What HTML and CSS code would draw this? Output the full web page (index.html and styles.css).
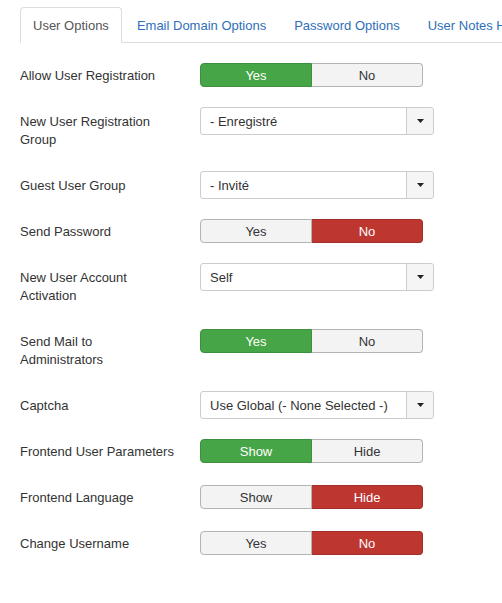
FILE: index.html
```html
<!DOCTYPE html>
<html>
<head>
<meta charset="utf-8">
<link rel="stylesheet" href="styles.css">
</head>
<body>
<div class="page">
  <ul class="nav-tabs">
    <li class="tab active"><a>User Options</a></li>
    <li class="tab"><a>Email Domain Options</a></li>
    <li class="tab"><a>Password Options</a></li>
    <li class="tab"><a>User Notes History</a></li>
  </ul>
  <div class="form">
    <div class="row">
      <label class="label">Allow User Registration</label>
      <div class="btn-group"><span class="btn on-green">Yes</span><span class="btn">No</span></div>
    </div>
    <div class="row">
      <label class="label">New User Registration Group</label>
      <div class="select"><span class="select-text">- Enregistré</span><span class="select-arrow"><svg width="7" height="4" viewBox="0 0 7 4"><path d="M0 0h7L3.5 4z" fill="#222"/></svg></span></div>
    </div>
    <div class="row">
      <label class="label">Guest User Group</label>
      <div class="select"><span class="select-text">- Invité</span><span class="select-arrow"><svg width="7" height="4" viewBox="0 0 7 4"><path d="M0 0h7L3.5 4z" fill="#222"/></svg></span></div>
    </div>
    <div class="row">
      <label class="label">Send Password</label>
      <div class="btn-group"><span class="btn">Yes</span><span class="btn on-red">No</span></div>
    </div>
    <div class="row">
      <label class="label">New User Account Activation</label>
      <div class="select"><span class="select-text">Self</span><span class="select-arrow"><svg width="7" height="4" viewBox="0 0 7 4"><path d="M0 0h7L3.5 4z" fill="#222"/></svg></span></div>
    </div>
    <div class="row">
      <label class="label">Send Mail to Administrators</label>
      <div class="btn-group"><span class="btn on-green">Yes</span><span class="btn">No</span></div>
    </div>
    <div class="row">
      <label class="label">Captcha</label>
      <div class="select"><span class="select-text">Use Global (- None Selected -)</span><span class="select-arrow"><svg width="7" height="4" viewBox="0 0 7 4"><path d="M0 0h7L3.5 4z" fill="#222"/></svg></span></div>
    </div>
    <div class="row">
      <label class="label">Frontend User Parameters</label>
      <div class="btn-group"><span class="btn on-green">Show</span><span class="btn">Hide</span></div>
    </div>
    <div class="row">
      <label class="label">Frontend Language</label>
      <div class="btn-group"><span class="btn">Show</span><span class="btn on-red">Hide</span></div>
    </div>
    <div class="row">
      <label class="label">Change Username</label>
      <div class="btn-group"><span class="btn">Yes</span><span class="btn on-red">No</span></div>
    </div>
  </div>
</div>
</body>
</html>
```
FILE: styles.css
```css
html, body {
  margin: 0;
  padding: 0;
  background: #fff;
  overflow: hidden;
}
body {
  font-family: "Liberation Sans", Arial, sans-serif;
  font-size: 13px;
  line-height: 18px;
  color: #333;
}
.page {
  padding: 7px 0 0 20px;
}
.nav-tabs {
  list-style: none;
  margin: 0 0 18px 0;
  padding: 0;
  display: flex;
  white-space: nowrap;
  border-bottom: 1px solid #ddd;
}
.tab {
  margin: 0 2px -1px 0;
  flex: none;
}
.tab a {
  display: block;
  padding: 9px 12px 7px;
  line-height: 18px;
  border: 1px solid transparent;
  border-radius: 4px 4px 0 0;
  color: #2f6fb9;
}
.tab.active a {
  color: #555;
  background: #fff;
  border-color: #ddd #ddd transparent #ddd;
}
.row {
  display: flex;
  align-items: flex-start;
  margin-bottom: 18px;
}
.label {
  width: 156px;
  margin-right: 24px;
  padding: 6px 0 4px;
  flex: none;
}
.btn-group {
  display: flex;
  width: 223px;
  margin-top: 2px;
}
.btn {
  flex: 1;
  text-align: center;
  padding: 3px 0 1px;
  line-height: 18px;
  background: #f3f3f3;
  border: 1px solid #b3b3b3;
  color: #333;
}
.btn:first-child {
  border-radius: 4px 0 0 4px;
}
.btn:last-child {
  border-radius: 0 4px 4px 0;
  border-left: none;
}
.btn.on-green {
  background: #46a546;
  border-color: #3d8f3d;
  color: #fff;
}
.btn.on-red {
  background: #bd362f;
  border-color: #a22e28;
  color: #fff;
}
.select {
  display: flex;
  width: 234px;
  height: 28px;
  box-sizing: border-box;
  border: 1px solid #ccc;
  border-radius: 3px;
  background: #fff;
}
.select-text {
  flex: 1;
  padding: 5px 0 3px 9px;
  color: #333;
}
.select-arrow {
  width: 26px;
  border-left: 1px solid #ccc;
  background: #f5f5f5;
  border-radius: 0 3px 3px 0;
  display: flex;
  align-items: center;
  justify-content: center;
}
.select-arrow svg {
  display: block;
}
```
